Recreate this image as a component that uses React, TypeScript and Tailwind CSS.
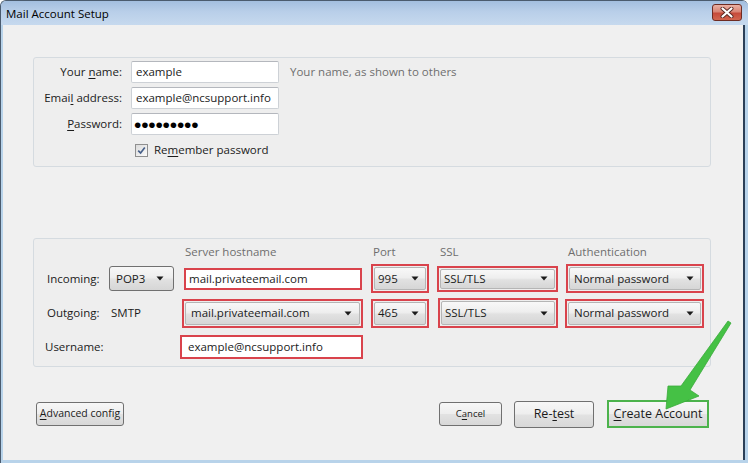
import React from "react";

const Caret = () => (
  <svg width="8" height="5" viewBox="0 0 8 5" className="shrink-0">
    <path d="M0.5 0.5H7.5L4 4.5Z" fill="#1a1a1a" />
  </svg>
);

function ComboInner({ text, pad = "pl-[5px] pr-[7px]" }: { text: string; pad?: string }) {
  return (
    <div
      className={`flex-1 h-full flex items-center justify-between ${pad} rounded-[2px] border border-[#b5b5b5] bg-[linear-gradient(#f8f8f8,#eeeeee_45%,#e1e1e1_55%,#d6d6d6)]`}
    >
      <span>{text}</span>
      <Caret />
    </div>
  );
}

function RedBox({ className, children }: { className: string; children: React.ReactNode }) {
  return <div className={`flex border-2 border-[#d9434c] ${className}`}>{children}</div>;
}

function Btn({ className, children }: { className: string; children: React.ReactNode }) {
  return (
    <div
      className={`flex items-center justify-center rounded-[3px] border border-[#707070] bg-[linear-gradient(#f7f7f7,#eeeeee_48%,#e2e2e2_52%,#d8d8d8)] ${className}`}
    >
      {children}
    </div>
  );
}

const U = ({ children }: { children: React.ReactNode }) => (
  <span className="underline underline-offset-[2px] decoration-1">{children}</span>
);

export default function App() {
  return (
    <div className="relative w-[748px] h-[463px] overflow-hidden bg-[#b8d3ea] border-l border-t border-[#4b5b6e] rounded-tl-[6px] rounded-tr-[6px] font-['Segoe_UI','Open_Sans',sans-serif] text-[11.5px] text-[#1b1b1b]">
      {/* Title bar */}
      <div className="h-[24px] flex items-start justify-between bg-[linear-gradient(#a3bedf,#b9cfe9_45%,#c6d9ee)]">
        <span className="pl-[5px] pt-[5px] text-[11.5px] leading-[16px] text-black">Mail Account Setup</span>
        <div className="mt-[3px] mr-[6px] w-[30px] h-[17px] rounded-[3px] border border-[#6e2b22] bg-[linear-gradient(#eab1a4,#d98474_45%,#c64a3a_55%,#d2664f)] flex items-center justify-center">
          <svg width="14" height="11" viewBox="0 0 14 11">
            <path d="M2.5 1.5L11.5 9.5M11.5 1.5L2.5 9.5" stroke="#5a2a24" strokeWidth="4" strokeLinecap="round" />
            <path d="M2.5 1.5L11.5 9.5M11.5 1.5L2.5 9.5" stroke="#ffffff" strokeWidth="2.2" strokeLinecap="round" />
          </svg>
        </div>
      </div>

      {/* Content */}
      <div className="ml-[2px] w-[742px] h-[435px] bg-[#f0f0f0] border-r-2 border-[#2b3f57] pl-[30px] pr-[32px] pt-[32px] flex flex-col">
        {/* Group 1 */}
        <div className="h-[110px] border border-[#d5dbe0] rounded-[3px] bg-[#eeeeee] pt-[3px]">
          <div className="grid grid-cols-[88px_148px_1fr] grid-rows-[22px_22px_22px_22px] gap-x-[9px] gap-y-[4px]">
            <div className="flex items-center justify-end">
              Your&nbsp;<U>n</U>ame:
            </div>
            <div className="h-[22px] bg-white border border-[#cdd1d6] border-t-[#b4b7bd] rounded-[2px] flex items-center pl-[4px]">
              example
            </div>
            <div className="flex items-center pl-[2px] text-[#6e6e6e]">Your name, as shown to others</div>

            <div className="flex items-center justify-end">
              Emai<U>l</U>&nbsp;address:
            </div>
            <div className="h-[22px] bg-white border border-[#cdd1d6] border-t-[#b4b7bd] rounded-[2px] flex items-center pl-[4px]">
              example@ncsupport.info
            </div>
            <div />

            <div className="flex items-center justify-end">
              <U>P</U>assword:
            </div>
            <div className="h-[22px] bg-white border border-[#cdd1d6] border-t-[#b4b7bd] rounded-[2px] flex items-center pl-[2px] overflow-hidden">
              <span className="text-[21px] leading-none tracking-[-0.2px] text-black font-['Liberation_Sans',sans-serif]">•••••••••</span>
            </div>
            <div />

            <div />
            <div className="flex items-center pl-[4px] gap-[6px]">
              <div className="w-[13px] h-[13px] border border-[#8f8f8f] bg-[linear-gradient(135deg,#dadada,#fbfbfb)] flex items-center justify-center">
                <svg width="9" height="9" viewBox="0 0 9 9">
                  <path d="M1.2 4.6L3.6 7L7.8 1.6" stroke="#47608a" strokeWidth="1.7" fill="none" />
                </svg>
              </div>
              <span>
                Re<U>m</U>ember password
              </span>
            </div>
            <div />
          </div>
        </div>

        {/* Group 2 */}
        <div className="mt-[71px] h-[129px] border border-[#d5dbe0] rounded-[3px] bg-[#eeeeee] pt-[5px]">
          <div className="grid grid-cols-[146px_191px_66px_128px_139px] grid-rows-[16px_29px_32px_28px] gap-y-[4px]">
            {/* headers */}
            <div />
            <div className="flex items-center pl-[5px] text-[#6e6e6e]">Server hostname</div>
            <div className="flex items-center pl-[2px] text-[#6e6e6e]">Port</div>
            <div className="flex items-center pl-[3px] text-[#6e6e6e]">SSL</div>
            <div className="flex items-center pl-[3px] text-[#6e6e6e]">Authentication</div>

            {/* Incoming */}
            <div className="flex items-center pl-[13px]">
              <span className="w-[62px]">Incoming:</span>
              <div className="flex w-[65px] h-[25px] rounded-[3px] border border-[#707070] bg-[linear-gradient(#f7f7f7,#eeeeee_45%,#e1e1e1_55%,#d6d6d6)] items-center justify-between pl-[6px] pr-[9px]">
                <span>POP3</span>
                <Caret />
              </div>
            </div>
            <div className="flex items-center pl-[4px]">
              <RedBox className="w-[178px] h-[22px]">
                <div className="flex-1 bg-white flex items-center pl-[3px]">mail.privateemail.com</div>
              </RedBox>
            </div>
            <div className="flex items-center">
              <RedBox className="w-[58px] h-[29px] p-[1px]">
                <ComboInner text="995" pad="pl-[3px] pr-[6px]" />
              </RedBox>
            </div>
            <div className="flex items-center">
              <RedBox className="w-[121px] h-[26px] p-[1px]">
                <ComboInner text="SSL/TLS" pad="pl-[3px] pr-[6px]" />
              </RedBox>
            </div>
            <div className="flex items-center pl-[1px]">
              <RedBox className="w-[138px] h-[29px] p-[1px]">
                <ComboInner text="Normal password" pad="pl-[4px] pr-[6px]" />
              </RedBox>
            </div>

            {/* Outgoing */}
            <div className="flex items-center pl-[13px]">
              <span className="w-[64px]">Outgoing:</span>
              <span>SMTP</span>
            </div>
            <div className="flex items-center pl-[2px]">
              <RedBox className="w-[181px] h-[29px] p-[1px]">
                <ComboInner text="mail.privateemail.com" pad="pl-[5px] pr-[7px]" />
              </RedBox>
            </div>
            <div className="flex items-center">
              <RedBox className="w-[58px] h-[29px] p-[1px]">
                <ComboInner text="465" pad="pl-[3px] pr-[6px]" />
              </RedBox>
            </div>
            <div className="flex items-center pl-[1px]">
              <RedBox className="w-[120px] h-[30px] p-[1px]">
                <ComboInner text="SSL/TLS" pad="pl-[3px] pr-[6px]" />
              </RedBox>
            </div>
            <div className="flex items-center">
              <RedBox className="w-[139px] h-[29px] p-[1px]">
                <ComboInner text="Normal password" pad="pl-[5px] pr-[6px]" />
              </RedBox>
            </div>

            {/* Username */}
            <div className="flex items-center pl-[11px]">Username:</div>
            <div className="flex items-center">
              <RedBox className="w-[183px] h-[24px]">
                <div className="flex-1 bg-white flex items-center pl-[6px]">example@ncsupport.info</div>
              </RedBox>
            </div>
            <div />
            <div />
            <div />
          </div>
        </div>

        {/* Buttons */}
        <div className="mt-[33px] h-[28px] flex items-center">
          <Btn className="ml-[3px] w-[88px] h-[24px] text-[10.5px]">
            <span>
              <U>A</U>dvanced config
            </span>
          </Btn>
          <div className="flex-1" />
          <Btn className="w-[63px] h-[24px] text-[9.5px]">
            <span>
              C<U>a</U>ncel
            </span>
          </Btn>
          <Btn className="ml-[12px] w-[80px] h-[27px] text-[12.5px]">
            <span>
              Re-<U>t</U>est
            </span>
          </Btn>
          <div className="ml-[13px] mr-[2px] w-[102px] h-[28px] border-2 border-[#4cb34c] flex">
            <div className="flex-1 flex items-center justify-center bg-[linear-gradient(#f7f7f7,#eeeeee_48%,#e2e2e2_52%,#d8d8d8)] text-[12.5px]">
              <span>
                <U>C</U>reate Account
              </span>
            </div>
          </div>
        </div>
      </div>

      {/* Annotation arrow */}
      <svg className="absolute -left-px -top-px pointer-events-none" width="748" height="463" viewBox="0 0 748 463">
        <polygon
          points="728,321 731,323 690,390 699,396 666,409 668,386 681,386"
          fill="#45c145"
          stroke="#3aaa3a"
          strokeWidth="0.8"
          strokeLinejoin="round"
        />
      </svg>
    </div>
  );
}
